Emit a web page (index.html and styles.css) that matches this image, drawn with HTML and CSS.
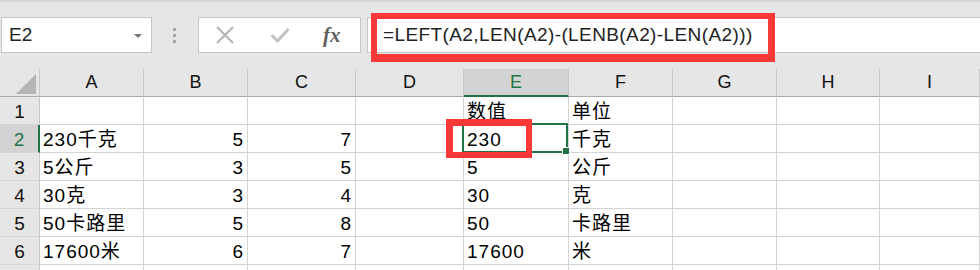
FILE: index.html
```html
<!DOCTYPE html>
<html lang="zh-CN">

<head>
    <meta charset="UTF-8">
    <title>Sheet</title>
    <link rel="stylesheet" href="styles.css">
</head>

<body>
    <div class="bar">
        <div class="name-box">E2<span class="caret"></span></div>
        <div class="grip"><i></i><i></i><i></i></div>
        <div class="fn-box">
            <svg class="cross" width="18" height="18" viewBox="0 0 18 18">
                <path d="M1 1L17 17M17 1L1 17" stroke="#b4b4b4" stroke-width="2" fill="none" />
            </svg>
            <svg class="check" width="20" height="16" viewBox="0 0 20 16">
                <path d="M1.5 8L7.5 14L18.5 2" stroke="#c2c2c2" stroke-width="3" fill="none" />
            </svg>
            <span class="fx">fx</span>
        </div>
        <div class="formula">
            <span>=LEFT(A2,LEN(A2)-(LENB(A2)-LEN(A2)))</span>
            <div class="mark"></div>
        </div>
    </div>

    <div class="sheet">
        <div class="hd corner">
            <svg width="20" height="20" viewBox="0 0 20 20"><path d="M20 0V20H0Z" fill="#b5b5b5" /></svg>
        </div>
        <div class="hd">A</div>
        <div class="hd">B</div>
        <div class="hd">C</div>
        <div class="hd">D</div>
        <div class="hd on">E</div>
        <div class="hd">F</div>
        <div class="hd">G</div>
        <div class="hd">H</div>
        <div class="hd">I</div>

        <div class="rh">1</div>
        <div class="c"></div><div class="c"></div><div class="c"></div><div class="c"></div>
        <div class="c">数值</div><div class="c">单位</div>
        <div class="c"></div><div class="c"></div><div class="c"></div>

        <div class="rh on">2</div>
        <div class="c">230千克</div><div class="c num">5</div><div class="c num">7</div><div class="c"></div>
        <div class="c sel">230<div class="mark-cell"></div></div><div class="c">千克</div>
        <div class="c"></div><div class="c"></div><div class="c"></div>

        <div class="rh">3</div>
        <div class="c">5公斤</div><div class="c num">3</div><div class="c num">5</div><div class="c"></div>
        <div class="c">5</div><div class="c">公斤</div>
        <div class="c"></div><div class="c"></div><div class="c"></div>

        <div class="rh">4</div>
        <div class="c">30克</div><div class="c num">3</div><div class="c num">4</div><div class="c"></div>
        <div class="c">30</div><div class="c">克</div>
        <div class="c"></div><div class="c"></div><div class="c"></div>

        <div class="rh">5</div>
        <div class="c">50卡路里</div><div class="c num">5</div><div class="c num">8</div><div class="c"></div>
        <div class="c">50</div><div class="c">卡路里</div>
        <div class="c"></div><div class="c"></div><div class="c"></div>

        <div class="rh">6</div>
        <div class="c">17600米</div><div class="c num">6</div><div class="c num">7</div><div class="c"></div>
        <div class="c">17600</div><div class="c">米</div>
        <div class="c"></div><div class="c"></div><div class="c"></div>

        <div class="rh"></div>
        <div class="c"></div><div class="c"></div><div class="c"></div><div class="c"></div>
        <div class="c"></div><div class="c"></div>
        <div class="c"></div><div class="c"></div><div class="c"></div>
    </div>
</body>

</html>
```

FILE: styles.css
```css
body {
    margin: 0;
    background: #e6e6e6;
    font-family: "Liberation Sans", "Noto Sans CJK SC", sans-serif;
    color: #000;
    width: 980px;
    height: 270px;
    overflow: hidden;
}

.bar {
    display: flex;
    border-top: 2px solid #d6d6d6;
    padding: 15px 0 16px;
}

.name-box {
    margin-left: 1px;
    width: 151px;
    height: 36px;
    box-sizing: border-box;
    background: #fff;
    border: 1px solid #c6c6c6;
    padding: 2px 0 0 7px;
    font-size: 19px;
    line-height: 30px;
    color: #222;
    position: relative;
}

.caret {
    position: absolute;
    right: 9px;
    top: 16px;
    border-left: 4px solid transparent;
    border-right: 4px solid transparent;
    border-top: 4px solid #777;
}

.grip {
    margin-left: 21px;
    display: flex;
    flex-direction: column;
    justify-content: center;
    gap: 3px;
}

.grip i {
    display: block;
    width: 3px;
    height: 3px;
    background: #a8a8a8;
}

.fn-box {
    margin-left: 22px;
    width: 163px;
    height: 36px;
    box-sizing: border-box;
    background: #fff;
    border: 1px solid #c6c6c6;
    display: flex;
    align-items: center;
    padding-left: 17px;
}

.check {
    margin-left: 36px;
}

.fx {
    margin-left: 33px;
    font-family: "Liberation Serif", serif;
    font-style: italic;
    font-weight: bold;
    font-size: 21px;
    color: #606060;
}

.formula {
    margin-left: 6px;
    flex: 1;
    height: 36px;
    box-sizing: border-box;
    background: #fff;
    border: 1px solid #c6c6c6;
    border-right: none;
    padding: 2px 0 0 15px;
    font-size: 19px;
    line-height: 30px;
    letter-spacing: 0.4px;
    color: #222;
    position: relative;
}

.mark {
    position: absolute;
    left: 3px;
    top: -5px;
    width: 404px;
    height: 49px;
    box-sizing: border-box;
    border: 6px solid #fb3838;
    border-right-width: 7px;
    border-bottom-width: 8px;
}

.sheet {
    display: grid;
    grid-template-columns: 40px 104px 104px 108px 108px 105px 104px 104px 103px 1fr;
    grid-auto-rows: 28px;
}

.c,
.hd,
.rh {
    box-sizing: border-box;
    border-right: 1px solid #d4d4d4;
    border-bottom: 1px solid #d4d4d4;
    white-space: nowrap;
    overflow: hidden;
}

.c {
    background: #fff;
    font-size: 19px;
    line-height: 25px;
    letter-spacing: 1px;
    padding: 2px 3px 0;
}

.c.num {
    text-align: right;
    padding-right: 3px;
}

.hd {
    background: #e6e6e6;
    border-right-color: #c8c8c8;
    border-bottom-color: #ababab;
    text-align: center;
    font-size: 18px;
    line-height: 26px;
    color: #111;
}

.hd.corner {
    display: flex;
    justify-content: flex-end;
    align-items: flex-end;
    padding: 0 3px 2px 0;
}

.hd.on {
    background: #d3d3d3;
    color: #217346;
    border-bottom: 2px solid #217346;
}

.rh {
    background: #e6e6e6;
    border-right-color: #c8c8c8;
    text-align: center;
    font-size: 19px;
    line-height: 25px;
    padding-top: 2px;
    color: #111;
}

.rh.on {
    background: #d3d3d3;
    color: #217346;
    border-right: 2px solid #217346;
}

.c.sel {
    position: relative;
    overflow: visible;
}

.c.sel::after {
    content: "";
    position: absolute;
    top: -2px;
    left: -2px;
    right: 0;
    bottom: -1px;
    border: 2px solid #217346;
}

.c.sel::before {
    content: "";
    position: absolute;
    right: -2px;
    bottom: -3px;
    width: 6px;
    height: 6px;
    background: #217346;
    border: 1px solid #fff;
    z-index: 1;
}

.mark-cell {
    position: absolute;
    left: -18px;
    top: -6px;
    width: 86px;
    height: 39px;
    box-sizing: border-box;
    border: 7px solid #fb3838;
    border-right-width: 6px;
    border-bottom-width: 6px;
    z-index: 2;
}
```
